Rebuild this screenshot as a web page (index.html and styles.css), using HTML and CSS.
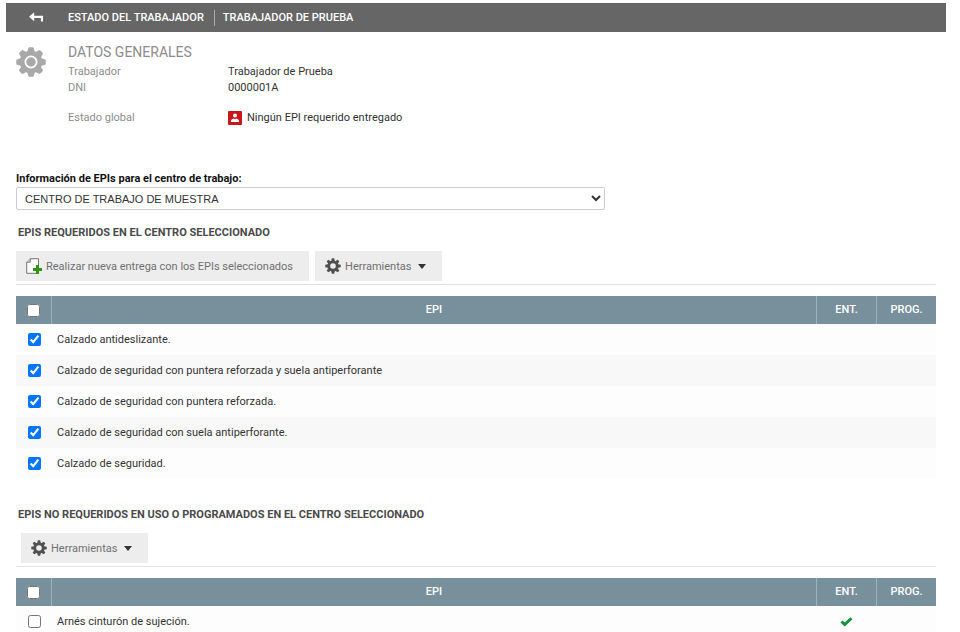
FILE: index.html
```html
<!DOCTYPE html>
<html lang="es">
<head>
  <meta charset="UTF-8">
  <meta name="viewport" content="width=device-width, initial-scale=1.0">
  <title>Estado del trabajador</title>
  <link rel="stylesheet" href="styles.css">
</head>
<body>

  <svg class="sprite" aria-hidden="true">
    <symbol id="gear" viewBox="0 0 32 32">
      <g fill="currentColor">
        <path id="tooth" d="M12 5 13.2 1Q13.4.3 14.1.3h3.8q.7 0 .9.7L20 5v22l-1.2 4q-.2.7-.9.7h-3.8q-.7 0-.9-.7L12 27z"/>
        <use href="#tooth" transform="rotate(45 16 16)"/>
        <use href="#tooth" transform="rotate(90 16 16)"/>
        <use href="#tooth" transform="rotate(135 16 16)"/>
        <circle cx="16" cy="16" r="12"/>
      </g>
    </symbol>
    <symbol id="gear-small" viewBox="0 0 32 32">
      <g fill="currentColor">
        <path id="tooth-small" d="M12.5 6 13.6.5h4.8L19.5 6v20l-1.1 5.5h-4.8L12.5 26z"/>
        <use href="#tooth-small" transform="rotate(45 16 16)"/>
        <use href="#tooth-small" transform="rotate(90 16 16)"/>
        <use href="#tooth-small" transform="rotate(135 16 16)"/>
        <circle cx="16" cy="16" r="11"/>
      </g>
      <circle cx="16" cy="16" r="5.6" fill="#ededed"/>
    </symbol>
  </svg>

  <header class="topbar">
    <a href="#" class="back" aria-label="Volver">
      <svg width="15" height="11" viewBox="0 0 15 11"><path d="M0 4.8 5.2.3v3.4H14V9.4H11.9V5.9H5.2v3.4z" fill="#fff"/></svg>
    </a>
    <span class="crumb">ESTADO DEL TRABAJADOR</span>
    <span class="crumb">TRABAJADOR DE PRUEBA</span>
  </header>

  <main>
    <section class="general">
      <svg class="general-icon" width="30" height="30" viewBox="0 0 32 32">
        <use href="#gear"/>
        <circle cx="16" cy="16" r="6" fill="none" stroke="#fff" stroke-width="1.9"/>
      </svg>
      <div>
        <h1>DATOS GENERALES</h1>
        <dl class="data">
          <dt>Trabajador</dt>
          <dd>Trabajador de Prueba</dd>
          <dt>DNI</dt>
          <dd>0000001A</dd>
          <dt class="global">Estado global</dt>
          <dd class="global">
            <svg width="14" height="14" viewBox="0 0 14 14">
              <rect width="14" height="14" rx="1" fill="#c8161a"/>
              <circle cx="7" cy="4.6" r="2" fill="#fff"/>
              <path d="M3 11V9.6Q3 8.4 5.6 7.4L7 8.2l1.4-.8Q11 8.4 11 9.6V11z" fill="#fff"/>
            </svg>
            Ningún EPI requerido entregado
          </dd>
        </dl>
      </div>
    </section>

    <div class="centro">
      <label for="centro">Información de EPIs para el centro de trabajo:</label>
      <select id="centro">
        <option>CENTRO DE TRABAJO DE MUESTRA</option>
      </select>
    </div>

    <section>
      <h2>EPIS REQUERIDOS EN EL CENTRO SELECCIONADO</h2>
      <div class="toolbar">
        <button type="button">
          <svg width="16" height="16" viewBox="0 0 16 16">
            <path d="M4.2.7h8.3v14.6H.7V4.2z" fill="#fafafa" stroke="#777"/>
            <path d="M4.2.7v3.5H.7" fill="#ddd" stroke="#777"/>
            <path d="M10 7h3v3h3v3h-3v3h-3v-3H7v-3h3z" fill="#2f9410"/>
          </svg>
          Realizar nueva entrega con los EPIs seleccionados
        </button>
        <button type="button">
          <svg width="16" height="16"><use href="#gear-small"/></svg>
          Herramientas
          <span class="caret"></span>
        </button>
      </div>
      <table>
        <thead>
          <tr>
            <th class="col-check"><input type="checkbox" aria-label="Seleccionar todos"></th>
            <th>EPI</th>
            <th class="col-small">ENT.</th>
            <th class="col-small">PROG.</th>
          </tr>
        </thead>
        <tbody>
          <tr>
            <td><input type="checkbox" id="epi1" checked></td>
            <td><label for="epi1">Calzado antideslizante.</label></td>
            <td></td>
            <td></td>
          </tr>
          <tr>
            <td><input type="checkbox" id="epi2" checked></td>
            <td><label for="epi2">Calzado de seguridad con puntera reforzada y suela antiperforante</label></td>
            <td></td>
            <td></td>
          </tr>
          <tr>
            <td><input type="checkbox" id="epi3" checked></td>
            <td><label for="epi3">Calzado de seguridad con puntera reforzada.</label></td>
            <td></td>
            <td></td>
          </tr>
          <tr>
            <td><input type="checkbox" id="epi4" checked></td>
            <td><label for="epi4">Calzado de seguridad con suela antiperforante.</label></td>
            <td></td>
            <td></td>
          </tr>
          <tr>
            <td><input type="checkbox" id="epi5" checked></td>
            <td><label for="epi5">Calzado de seguridad.</label></td>
            <td></td>
            <td></td>
          </tr>
        </tbody>
      </table>
    </section>

    <section>
      <h2>EPIS NO REQUERIDOS EN USO O PROGRAMADOS EN EL CENTRO SELECCIONADO</h2>
      <div class="toolbar indented">
        <button type="button">
          <svg width="16" height="16"><use href="#gear-small"/></svg>
          Herramientas
          <span class="caret"></span>
        </button>
      </div>
      <table>
        <thead>
          <tr>
            <th class="col-check"><input type="checkbox" aria-label="Seleccionar todos"></th>
            <th>EPI</th>
            <th class="col-small">ENT.</th>
            <th class="col-small">PROG.</th>
          </tr>
        </thead>
        <tbody>
          <tr>
            <td><input type="checkbox" id="epi6"></td>
            <td><label for="epi6">Arnés cinturón de sujeción.</label></td>
            <td class="entregado">
              <svg width="13" height="10" viewBox="0 0 13 10" role="img" aria-label="Entregado"><path d="M.4 5.4 2.4 3.4 4.8 5.6 10.4.3 12.4 2.2 4.8 9.6z" fill="#12913a"/></svg>
            </td>
            <td></td>
          </tr>
        </tbody>
      </table>
    </section>
  </main>

</body>
</html>
```
FILE: styles.css
```css
* {
  box-sizing: border-box;
}

body {
  margin: 0;
  padding: 3px 14px 0 6px;
  font-family: Roboto, sans-serif;
  font-size: 11px;
  line-height: 16px;
  color: #333;
  background-color: #fff;
}

.sprite {
  position: absolute;
  width: 0;
  height: 0;
}

/* barra superior */
.topbar {
  display: flex;
  align-items: center;
  height: 29px;
  background-color: #666;
  color: #fff;
  font-weight: 500;
}

.back {
  display: flex;
  width: 62px;
  padding-left: 23px;
}

.crumb + .crumb {
  margin-left: 10px;
  padding-left: 8px;
  border-left: 1px solid #aaa;
}

main {
  padding: 0 10px;
}

/* datos generales */
.general {
  display: flex;
  gap: 22px;
  padding-top: 11px;
}

.general-icon {
  margin-top: 4px;
  color: #a8a8a8;
}

h1 {
  margin: 0 0 3px;
  font-size: 14px;
  font-weight: normal;
  line-height: 18px;
  color: #8c8c8c;
}

.data {
  display: grid;
  grid-template-columns: 160px auto;
  margin: 0;
}

.data dt {
  color: #8c8c8c;
}

.data dd {
  display: flex;
  align-items: center;
  gap: 5px;
  margin: 0;
}

.data .global {
  margin-top: 14px;
}

/* selector de centro */
.centro {
  margin-top: 45px;
}

.centro label {
  display: block;
  font-weight: bold;
  color: #111;
}

select {
  display: block;
  width: 64%;
  height: 23px;
  padding: 0 4px;
  font-family: "Liberation Sans", Arial, sans-serif;
  font-size: 11px;
  color: #333;
  background-color: #fff;
  border: 1px solid #ccc;
  border-radius: 2px;
}

h2 {
  margin: 0 0 10px;
  padding: 15px 2px 0;
  font-size: 11px;
  font-weight: bold;
  line-height: 16px;
  color: #4a4a4a;
}

section + section h2 {
  padding-top: 28px;
}

/* botones */
.toolbar {
  display: flex;
  gap: 6px;
  margin-bottom: 11px;
  padding-bottom: 3px;
  border-bottom: 1px solid #e2e2e2;
}

.indented {
  padding-left: 5px;
}

button {
  display: flex;
  align-items: center;
  gap: 4px;
  height: 30px;
  padding: 0 16px 0 10px;
  font-family: inherit;
  font-size: 11px;
  color: #707070;
  background-color: #ededed;
  border: none;
  cursor: pointer;
}

button svg {
  color: #505050;
}

.caret {
  margin-left: 3px;
  border: 4px solid transparent;
  border-top: 5px solid #333;
  border-bottom: none;
}

/* tablas */
table {
  width: 100%;
  table-layout: fixed;
  border-collapse: separate;
  border-spacing: 0;
}

th {
  height: 28px;
  padding: 0;
  font-weight: 500;
  color: #fff;
  background-color: #78909c;
}

th + th {
  border-left: 1px solid #9fb1ba;
}

.col-check {
  width: 35px;
}

.col-small {
  width: 60px;
}

td {
  height: 31px;
  padding: 0 6px;
  background-color: #fdfdfd;
}

tr:nth-child(even) td {
  background-color: #f8f8f8;
}

td:first-child {
  padding: 0 0 0 2px;
}

input[type="checkbox"] {
  display: block;
  width: 13px;
  height: 13px;
  margin: 0 auto;
}

.entregado svg {
  display: block;
  margin: 0 auto;
}
```
